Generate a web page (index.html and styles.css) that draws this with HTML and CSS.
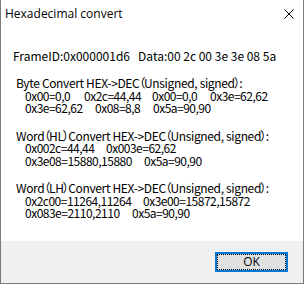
FILE: index.html
```html
<!DOCTYPE html>
<html lang="en">
<head>
    <meta charset="UTF-8">
    <meta name="viewport" content="width=device-width, initial-scale=1.0">
    <link rel="stylesheet" href="styles.css">
</head>
<body>
    <div class="window">
        <div class="titlebar">
            <span class="title">Hexadecimal convert</span>
            <svg class="close" width="10" height="10" viewBox="0 0 10 10">
                <path d="M0.5 0.5 L9.5 9.5 M9.5 0.5 L0.5 9.5" stroke="#000" stroke-width="1" fill="none"/>
            </svg>
        </div>
        <div class="content">
            <div class="frame">FrameID:0x000001d6   Data:00 2c 00 3e 3e 08 5a</div>

            <div class="section">
                <div class="heading">Byte Convert HEX-&gt;DEC<span class="lp">（</span>Unsigned, signed<span class="rp">）</span>:</div>
                <div class="values"><span class="v w59">0x00=0,0</span><span class="v w68">0x2c=44,44</span><span class="v w58">0x00=0,0</span><span class="v">0x3e=62,62</span></div>
                <div class="values"><span class="v w70">0x3e=62,62</span><span class="v w58">0x08=8,8</span><span class="v">0x5a=90,90</span></div>
            </div>

            <div class="section">
                <div class="heading">Word<span class="lp">（</span>HL<span class="rp">）</span>Convert HEX-&gt;DEC<span class="lp">（</span>Unsigned, signed<span class="rp">）</span>:</div>
                <div class="values"><span class="v w81">0x002c=44,44</span><span class="v">0x003e=62,62</span></div>
                <div class="values"><span class="v w119">0x3e08=15880,15880</span><span class="v">0x5a=90,90</span></div>
            </div>

            <div class="section">
                <div class="heading">Word<span class="lp">（</span>LH<span class="rp">）</span>Convert HEX-&gt;DEC<span class="lp">（</span>Unsigned, signed<span class="rp">）</span>:</div>
                <div class="values"><span class="v w118">0x2c00=11264,11264</span><span class="v">0x3e00=15872,15872</span></div>
                <div class="values"><span class="v w107">0x083e=2110,2110</span><span class="v">0x5a=90,90</span></div>
            </div>
        </div>
        <div class="footer">
            <button type="button" class="ok">OK</button>
        </div>
    </div>
</body>
</html>
```

FILE: styles.css
```css
body {
    margin: 0;
    padding: 0;
    background-color: #fff;
}

.window {
    width: 304px;
    height: 284px;
    box-sizing: border-box;
    border: 1px solid #7a7a7a;
    border-top: none;
    display: flex;
    flex-direction: column;
    background-color: #fff;
}

.titlebar {
    flex-shrink: 0;
    height: 30px;
    display: flex;
    align-items: center;
    justify-content: space-between;
    padding: 0 9px 0 4px;
    font-family: "Open Sans", "Noto Sans", sans-serif;
    font-size: 12px;
    color: #000;
}
.title {
    margin-top: -4px;
}
.close {
    margin-top: -2px;
}

.content {
    flex: 1;
    min-height: 0;
    padding: 19px 0 0 12px;
    font-family: "Noto Sans CJK SC", sans-serif;
    font-size: 12px;
    color: #000;
}

.frame, .heading, .values {
    white-space: pre;
}

.frame {
    line-height: 13px;
}

.section {
    margin-top: 15px;
    padding-left: 3px;
}
.heading, .values {
    line-height: 12.5px;
    letter-spacing: -0.5px;
}
.heading {
    letter-spacing: -0.35px;
}
.lp {
    margin-left: -6px;
    margin-right: -1px;
}
.rp {
    margin-left: -1px;
    margin-right: -6px;
}

.values {
    padding-left: 9px;
}
.v {
    display: inline-block;
}
.w58 { width: 58px; }
.w59 { width: 59px; }
.w68 { width: 68px; }
.w70 { width: 70px; }
.w81 { width: 81px; }
.w107 { width: 107px; }
.w118 { width: 118px; }
.w119 { width: 119px; }

.footer {
    flex-shrink: 0;
    height: 42px;
    background-color: #f0f0f0;
    display: flex;
    align-items: flex-start;
    justify-content: flex-end;
    padding: 11px 15px 0 0;
    box-sizing: border-box;
}

.ok {
    width: 73px;
    height: 20px;
    padding: 0;
    border: 2px solid #0078d7;
    background-color: #e1e1e1;
    outline: 1px dotted #000;
    outline-offset: -3px;
    font-family: "Open Sans", "Noto Sans", sans-serif;
    font-size: 12px;
    color: #000;
    line-height: 14px;
}
```
